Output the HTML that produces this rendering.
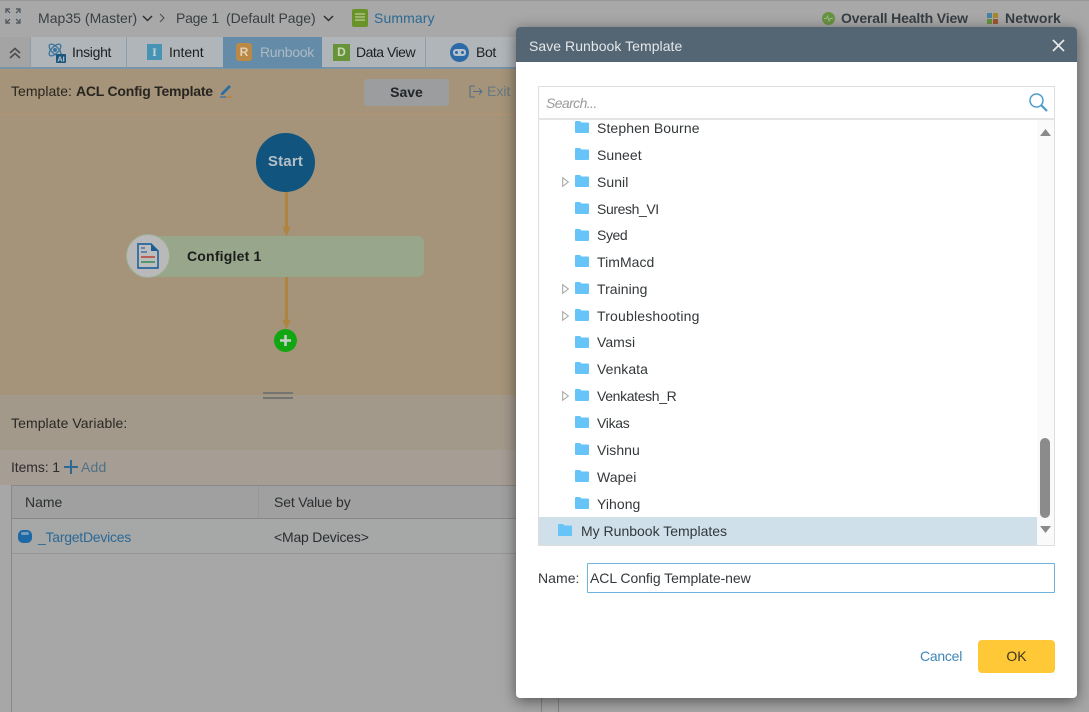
<!DOCTYPE html>
<html><head><meta charset="utf-8"><style>
html,body{margin:0;padding:0;width:1089px;height:712px;overflow:hidden;background:#b0b0b0}
body{position:relative;font-family:"Liberation Sans",sans-serif;font-size:14px;color:#333;filter:blur(.35px)}
.a{position:absolute}
.t{position:absolute;white-space:nowrap;line-height:18px;letter-spacing:.05px}
svg{position:absolute;overflow:visible}
.bk{color:#1f2224}.g{color:#3c4347}.b{color:#2f6f9c}
.r{color:#33383b;left:597px}
</style></head><body>

<!-- top bar -->
<div class="a" style="left:0;top:0;width:1089px;height:37px;background:#b2b2b2;border-top:1px solid #a0a0a0;box-sizing:border-box"></div>
<svg style="left:6px;top:9px" width="14" height="14" fill="none" stroke="#4a5258" stroke-width="1.2"><path d="M0 4V0h4M14 4V0h-4M0 10v4h4M14 10v4h-4M1 1l3 3M13 1l-3 3M1 13l3-3M13 13l-3-3"/></svg>
<div class="t g" style="left:38px;top:9px;letter-spacing:.03px">Map35 (Master)</div>
<svg style="left:142px;top:15px" width="11" height="7" fill="none" stroke="#333" stroke-width="1.5"><path d="M1 1l4.500 4.500L10 1"/></svg>
<svg style="left:159px;top:13px" width="6" height="10" fill="none" stroke="#555" stroke-width="1.1"><path d="M1 1l4 4-4 4"/></svg>
<div class="t g" style="left:176px;top:9px;letter-spacing:-.25px">Page 1</div>
<div class="t g" style="left:226px;top:9px;letter-spacing:-.05px">(Default Page)</div>
<svg style="left:323px;top:15px" width="11" height="7" fill="none" stroke="#333" stroke-width="1.5"><path d="M1 1l4.500 4.500L10 1"/></svg>
<div class="a" style="left:352px;top:9px;width:16px;height:18px;background:#6f9a2c;border-radius:2px"></div>
<svg style="left:355px;top:13px" width="10" height="10" stroke="#c5d6a0" stroke-width="1.2"><path d="M0 1h10M0 4h10M0 7h10"/></svg>
<div class="t b" style="left:374px;top:9px;letter-spacing:.1px">Summary</div>
<div class="a" style="left:822px;top:12px;width:13px;height:13px;border-radius:50%;background:#6d9c44"></div>
<svg style="left:824px;top:15px" width="9" height="7" fill="none" stroke="#a8c890" stroke-width=".9"><path d="M0 3.500h2.500l1-2.500 1.500 5 1-2.500h3"/></svg>
<div class="t" style="left:841px;top:9px;color:#394247;font-weight:bold;letter-spacing:-.15px;font-size:14px">Overall Health View</div>
<div class="a" style="left:987px;top:13px;width:5px;height:5px;background:#4a8ab0"></div>
<div class="a" style="left:993px;top:13px;width:5px;height:5px;background:#b09030"></div>
<div class="a" style="left:987px;top:19px;width:5px;height:5px;background:#6b9a40"></div>
<div class="a" style="left:993px;top:19px;width:5px;height:5px;background:#a85a30"></div>
<div class="t" style="left:1005px;top:9px;color:#394247;font-weight:bold;letter-spacing:.1px">Network</div>

<!-- tabs -->
<div class="a" style="left:0;top:37px;width:530px;height:31px;background:#b9bfc3"></div>
<div class="a" style="left:0;top:37px;width:30px;height:31px;background:#adadad"></div>
<div class="a" style="left:0;top:67px;width:530px;height:2px;background:#7e9db2"></div>
<div class="a" style="left:30px;top:37px;width:1px;height:31px;background:#97a8b3"></div>
<div class="a" style="left:126px;top:37px;width:1px;height:31px;background:#97a8b3"></div>
<div class="a" style="left:425px;top:37px;width:1px;height:31px;background:#97a8b3"></div>
<svg style="left:9px;top:47px" width="12" height="12" fill="none" stroke="#4e5254" stroke-width="1.6"><path d="M1 6l5-4.500L11 6M1 11l5-4.500L11 11"/></svg>
<svg style="left:47px;top:43px" width="19" height="20" fill="none"><ellipse cx="8" cy="7" rx="7.500" ry="3.500" stroke="#3e7ba6" stroke-width="1.300" transform="rotate(45 8 7)"/><ellipse cx="8" cy="7" rx="7.500" ry="3.500" stroke="#3e7ba6" stroke-width="1.300" transform="rotate(-45 8 7)"/><circle cx="8" cy="7" r="2" fill="#3e7ba6"/><rect x="9" y="11" width="10" height="9" rx="1" fill="#1c5a84"/><text x="14" y="18.500" font-family="Liberation Sans" font-size="7.500" font-weight="bold" fill="#c5d3dc" text-anchor="middle">AI</text></svg>
<div class="t bk" style="left:72px;top:43px;letter-spacing:-.3px">Insight</div>
<div class="a" style="left:147px;top:44px;width:15px;height:16px;background:#4a9bbd;color:#cde0e8;font:bold 12px/16px 'Liberation Serif',serif;text-align:center">I</div>
<div class="t bk" style="left:169px;top:43px;letter-spacing:-.08px">Intent</div>
<div class="a" style="left:223px;top:37px;width:99px;height:31px;background:#6a94b2"></div>
<div class="a" style="left:236px;top:43px;width:16px;height:18px;background:#c6914a;border-radius:3px;color:#ecdcc0;font:bold 12px/18px 'Liberation Sans',sans-serif;text-align:center">R</div>
<div class="t" style="left:260px;top:43px;color:#b6c4cf;letter-spacing:-.3px">Runbook</div>
<div class="a" style="left:333px;top:44px;width:17px;height:17px;background:#6d9c3c;color:#d5e2c0;font:bold 12px/17px 'Liberation Sans',sans-serif;text-align:center">D</div>
<div class="t bk" style="left:356px;top:43px;letter-spacing:-.5px">Data View</div>
<div class="a" style="left:450px;top:43px;width:19px;height:19px;border-radius:50%;background:#2f6fb0"></div>
<div class="a" style="left:453px;top:49px;width:13px;height:7px;border-radius:3px;background:#c0cdd8"></div>
<div class="a" style="left:455px;top:51px;width:3px;height:3px;border-radius:50%;background:#2f6fb0"></div>
<div class="a" style="left:461px;top:51px;width:3px;height:3px;border-radius:50%;background:#2f6fb0"></div>
<div class="t bk" style="left:476px;top:43px;letter-spacing:-.4px">Bot</div>

<!-- template bar / canvas -->
<div class="a" style="left:0;top:69px;width:530px;height:326px;background:#ae9c80"></div>
<div class="a" style="left:0;top:114px;width:530px;height:1px;background:#bd9c76"></div>
<div class="t" style="left:11px;top:82px;color:#2b2722;letter-spacing:.03px">Template:</div>
<div class="t" style="left:76px;top:82px;color:#2b2722;font-weight:bold;letter-spacing:-.22px">ACL Config Template</div>
<svg style="left:219px;top:83px" width="14" height="15" fill="none"><path d="M2 10L10 2l2 2-8 8H2z" fill="#2f74ad"/><path d="M1 14h6" stroke="#2f74ad" stroke-width="1.2"/><path d="M7 14h6" stroke="#c78a30" stroke-width="1.2"/></svg>
<div class="a" style="left:364px;top:79px;width:85px;height:27px;background:#a4a6a8;border-radius:3px;color:#24282b;font-weight:bold;font-size:14px;line-height:26px;text-align:center">Save</div>
<svg style="left:469px;top:85px" width="14" height="13" fill="none" stroke="#55778f" stroke-width="1.1"><path d="M6 1H1v11h5M4 6.500h9M10 3.500l3 3-3 3"/></svg>
<div class="t" style="left:487px;top:82px;color:#6b7f8c;letter-spacing:0">Exit</div>

<div class="a" style="left:256px;top:133px;width:59px;height:59px;border-radius:50%;background:#125a85"></div>
<div class="t" style="left:256px;top:153px;width:59px;text-align:center;color:#bfcad0;font-weight:bold;font-size:15px;letter-spacing:.2px">Start</div>
<div class="a" style="left:284.500px;top:192px;width:3px;height:36px;background:#b98c44"></div>
<svg style="left:281.500px;top:226px" width="9" height="10"><path d="M0 0l4.500 2 4.500-2-4.500 10z" fill="#b98c44"/></svg>
<div class="a" style="left:150px;top:236px;width:274px;height:41px;background:#a1af94;border:1px solid #9cb08f;box-sizing:border-box;border-radius:6px"></div>
<div class="a" style="left:126px;top:234px;width:44px;height:44px;border-radius:50%;background:#c3c3c3;border:1px solid #a5b89a;box-sizing:border-box"></div>
<svg style="left:137px;top:243px" width="22" height="26" fill="none"><path d="M1 1h13l7 7v17H1z" fill="#c8c8c8" stroke="#2a6ca8" stroke-width="1.700"/><path d="M14 1v7h7z" fill="#1e5f9c"/><path d="M4 5h4M4 9h6" stroke="#2a6ca8" stroke-width="1.300"/><path d="M4 14h14" stroke="#bf5a50" stroke-width="1.800"/><path d="M4 19h14" stroke="#4a9a6a" stroke-width="1.800"/></svg>
<div class="t" style="left:187px;top:247px;color:#1c1e1c;font-weight:bold;letter-spacing:.2px;font-size:14px">Configlet 1</div>
<div class="a" style="left:284.500px;top:277px;width:3px;height:44px;background:#b98c44"></div>
<svg style="left:281.500px;top:319px" width="9" height="10"><path d="M0 0l4.500 2 4.500-2-4.500 10z" fill="#b98c44"/></svg>
<div class="a" style="left:274px;top:329px;width:23px;height:23px;border-radius:50%;background:#14b014"></div>
<svg style="left:279px;top:334px" width="13" height="13" stroke="#d4d8d4" stroke-width="2.600"><path d="M6.500 1v11M1 6.500h11"/></svg>

<!-- lower -->
<div class="a" style="left:0;top:395px;width:530px;height:55px;background:#aca293"></div>
<div class="a" style="left:263px;top:392px;width:30px;height:2px;background:#7b7b78"></div>
<div class="a" style="left:263px;top:397px;width:30px;height:2px;background:#7b7b78"></div>
<div class="t" style="left:11px;top:414px;color:#2b2a27;letter-spacing:.08px">Template Variable:</div>
<div class="a" style="left:0;top:450px;width:530px;height:35px;background:#afa69e"></div>
<div class="t" style="left:11px;top:458px;color:#2f2f2d;letter-spacing:-.1px">Items: 1</div>
<svg style="left:64px;top:460px" width="14" height="14" stroke="#2f6f9c" stroke-width="2"><path d="M7 0v14M0 7h14"/></svg>
<div class="t" style="left:81px;top:458px;color:#55778f;letter-spacing:.2px">Add</div>
<div class="a" style="left:11px;top:485px;width:519px;height:227px;background:#b0b0b0;border:1px solid #8f9091;border-right:0;border-bottom:0;box-sizing:border-box"></div>
<div class="a" style="left:12px;top:486px;width:518px;height:32px;background:#a9a9a9;border-bottom:1px solid #8f9091"></div>
<div class="a" style="left:258px;top:486px;width:1px;height:32px;background:#a0a0a0"></div>
<div class="a" style="left:12px;top:519px;width:518px;height:35px;background:#afb1b2;border-bottom:1px solid #9d9d9d;box-sizing:border-box"></div>
<div class="t" style="left:25px;top:493px;color:#2e3133;letter-spacing:0">Name</div>
<div class="t" style="left:274px;top:493px;color:#2e3133;letter-spacing:-.15px">Set Value by</div>
<div class="a" style="left:18px;top:530px;width:14px;height:13px;border-radius:5px;background:#1f6fae"></div>
<div class="a" style="left:21px;top:532px;width:8px;height:3px;border-radius:2px;background:#7aa8c8"></div>
<div class="t" style="left:38px;top:528px;color:#2f6f9c;letter-spacing:-.25px">_TargetDevices</div>
<div class="t" style="left:274px;top:528px;color:#2e3133;letter-spacing:-.2px">&lt;Map Devices&gt;</div>
<div class="a" style="left:541px;top:698px;width:1px;height:14px;background:#8b8b8b"></div>
<div class="a" style="left:558px;top:698px;width:1px;height:14px;background:#8b8b8b"></div>

<!-- slight extra dim on background layer -->
<div class="a" style="left:0;top:0;width:1089px;height:712px;background:rgba(0,0,0,.05)"></div>

<!-- dialog -->
<div class="a" style="left:516px;top:27px;width:561px;height:671px;background:#fff;border-radius:4px;box-shadow:0 3px 14px rgba(40,40,40,.65)"></div>
<div class="a" style="left:516px;top:27px;width:561px;height:35px;background:#546673;border-radius:4px 4px 0 0"></div>
<div class="t" style="left:529px;top:37px;color:#e3e7ea;letter-spacing:.05px">Save Runbook Template</div>
<svg style="left:1052px;top:39px" width="13" height="13" stroke="#e6eaec" stroke-width="1.700"><path d="M1 1l11 11M12 1L1 12"/></svg>

<div class="a" style="left:538px;top:86px;width:517px;height:460px;border:1px solid #dedede;box-sizing:border-box"></div>
<div class="a" style="left:538px;top:118px;width:517px;height:2px;background:#e4e4e4"></div>
<div class="t" style="left:546px;top:94px;color:#9a9a9a;font-style:italic;letter-spacing:-.6px">Search...</div>
<svg style="left:1029px;top:93px" width="19" height="19" fill="none" stroke="#4b9ccd" stroke-width="1.500"><circle cx="7.500" cy="7.500" r="6.500"/><path d="M12 12l6 6" stroke-width="2.200"/></svg>
<div class="a" style="left:1037px;top:120px;width:17px;height:425px;background:#fafafa"></div>
<svg style="left:1040px;top:129px" width="11" height="7"><path d="M0 7l5.500-7 5.500 7z" fill="#8a8a8a"/></svg>
<svg style="left:1040px;top:526px" width="11" height="7"><path d="M0 0l5.500 7L11 0z" fill="#8a8a8a"/></svg>
<div class="a" style="left:1040px;top:438px;width:10px;height:80px;background:#8b8b8b;border-radius:5px"></div>
<div class="a" style="left:539px;top:517px;width:498px;height:28px;background:#cfe0ea"></div>

<svg width="0" height="0" style="left:0;top:0"><defs>
<g id="f"><path d="M0 2a1 1 0 0 1 1-1h4l1.500 1.500H13a1 1 0 0 1 1 1V12a1 1 0 0 1-1 1H1a1 1 0 0 1-1-1z" fill="#66c4f8"/></g>
<g id="ar"><path d="M.7.7l5.600 4.300-5.600 4.300z" fill="none" stroke="#a8a8a8" stroke-width="1.100"/></g>
</defs></svg>

<svg style="left:0;top:0" width="1089" height="712">
<use href="#f" x="575" y="120"/><use href="#f" x="575" y="147"/><use href="#f" x="575" y="174"/><use href="#f" x="575" y="201"/><use href="#f" x="575" y="228"/><use href="#f" x="575" y="254"/><use href="#f" x="575" y="281"/><use href="#f" x="575" y="308"/><use href="#f" x="575" y="335"/><use href="#f" x="575" y="361"/><use href="#f" x="575" y="388"/><use href="#f" x="575" y="415"/><use href="#f" x="575" y="442"/><use href="#f" x="575" y="469"/><use href="#f" x="575" y="496"/><use href="#f" x="558" y="523"/>
<use href="#ar" x="562" y="177"/><use href="#ar" x="562" y="284"/><use href="#ar" x="562" y="311"/><use href="#ar" x="562" y="391"/>
</svg>

<div class="t r" style="top:119px;letter-spacing:.1px">Stephen Bourne</div>
<div class="t r" style="top:146px">Suneet</div>
<div class="t r" style="top:173px">Sunil</div>
<div class="t r" style="top:200px;letter-spacing:-.4px">Suresh_VI</div>
<div class="t r" style="top:226px;letter-spacing:-.4px">Syed</div>
<div class="t r" style="top:253px">TimMacd</div>
<div class="t r" style="top:280px">Training</div>
<div class="t r" style="top:307px;letter-spacing:.18px">Troubleshooting</div>
<div class="t r" style="top:333px">Vamsi</div>
<div class="t r" style="top:360px">Venkata</div>
<div class="t r" style="top:387px;letter-spacing:-.35px">Venkatesh_R</div>
<div class="t r" style="top:414px;letter-spacing:-.3px">Vikas</div>
<div class="t r" style="top:441px">Vishnu</div>
<div class="t r" style="top:468px">Wapei</div>
<div class="t r" style="top:495px">Yihong</div>
<div class="t r" style="left:581px;top:522px;letter-spacing:0">My Runbook Templates</div>

<div class="t" style="left:538px;top:569px;color:#33383b;letter-spacing:.05px">Name:</div>
<div class="a" style="left:587px;top:563px;width:468px;height:30px;border:1px solid #6db3dc;box-sizing:border-box;border-radius:1px"></div>
<div class="t" style="left:590px;top:569px;color:#33383b;letter-spacing:-.05px">ACL Config Template-new</div>
<div class="t" style="left:920px;top:647px;color:#3d87b8;letter-spacing:-.25px">Cancel</div>
<div class="a" style="left:978px;top:640px;width:77px;height:33px;background:#ffc836;border-radius:4px;color:#3a3520;line-height:33px;text-align:center;font-size:14px">OK</div>
</body></html>
